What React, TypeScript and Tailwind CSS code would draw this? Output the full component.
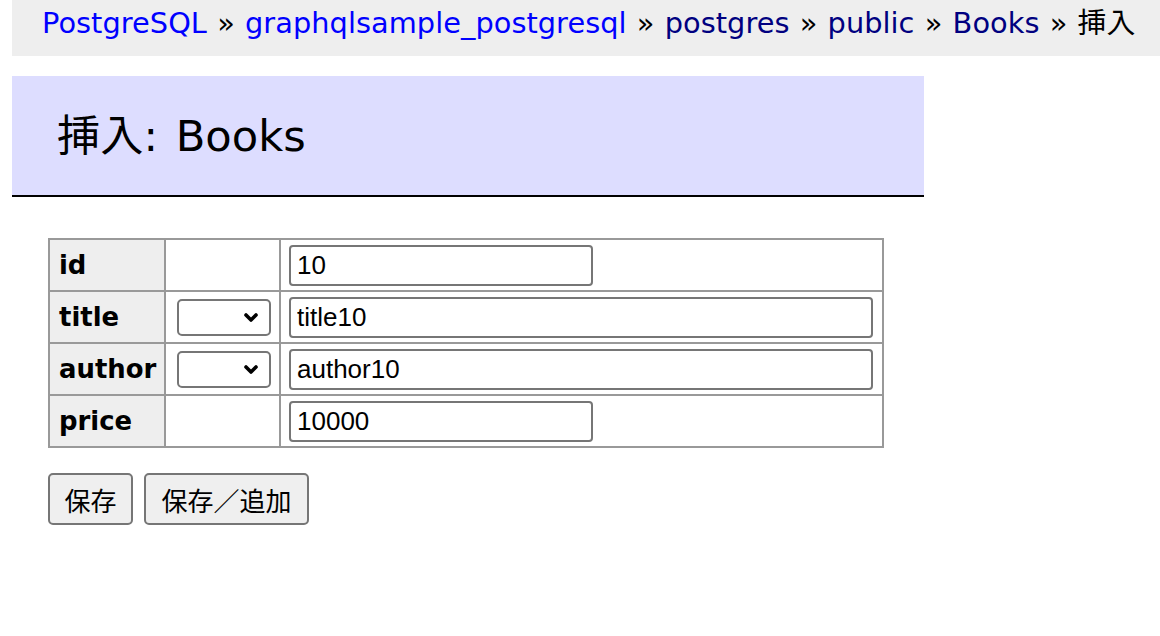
import React from "react";

type Field = {
  name: string;
  value: string;
  hasFunction: boolean;
  wide: boolean;
};

const fields: Field[] = [
  { name: "id", value: "10", hasFunction: false, wide: false },
  { name: "title", value: "title10", hasFunction: true, wide: true },
  { name: "author", value: "author10", hasFunction: true, wide: true },
  { name: "price", value: "10000", hasFunction: false, wide: false },
];

const crumbs = [
  { label: "PostgreSQL", color: "text-[#0000ff]" },
  { label: "graphqlsample_postgresql", color: "text-[#0000ff]" },
  { label: "postgres", color: "text-[#000080]" },
  { label: "public", color: "text-[#000080]" },
  { label: "Books", color: "text-[#000080]" },
];

function Breadcrumb() {
  return (
    <p className="ml-[12px] flex h-[56px] items-center overflow-hidden whitespace-pre bg-[#eeeeee] pb-[8px] pl-[30px] text-[28.8px] tracking-[0.05px] [word-spacing:1px]">
      {crumbs.map((c) => (
        <span key={c.label}>
          <a href="#" className={c.color}>
            {c.label}
          </a>
          {" » "}
        </span>
      ))}
      <span>挿入</span>
    </p>
  );
}

function FunctionSelect() {
  return (
    <div className="relative h-[37px] w-[94px]">
      <select
        className="h-full w-full appearance-none rounded-[5px] border-2 border-[#767676] bg-white"
        defaultValue=""
      >
        <option value=""></option>
      </select>
      {/* chevron */}
      <svg
        className="pointer-events-none absolute right-[13px] top-[14px]"
        width="14"
        height="9"
        viewBox="0 0 14 9"
      >
        <polyline
          points="2,2 7,7 12,2"
          fill="none"
          stroke="#000"
          strokeWidth="3.6"
          strokeLinecap="round"
          strokeLinejoin="round"
        />
      </svg>
    </div>
  );
}

export default function App() {
  return (
    <div className="min-h-screen bg-white font-['DejaVu_Sans','Noto_Sans_CJK_JP',sans-serif] text-black">
      <Breadcrumb />

      <h2 className="ml-[12px] mt-[20px] w-[912px] border-b-2 border-black bg-[#ddddff] px-[45px] py-[34.5px] text-[43.2px] font-normal leading-[50px] [word-spacing:4px]">
        挿入: Books
      </h2>

      <form className="ml-[48px] mt-[41px]">
        <table className="w-[836px] table-fixed border-separate border-spacing-0 border-l-2 border-t-2 border-[#999999] text-[25.9px]">
          <tbody>
            {fields.map((f) => (
              <tr key={f.name} className="h-[52px]">
                <th className="w-[116px] border-b-2 border-r-2 border-[#999999] bg-[#eeeeee] pl-[9px] text-left align-middle font-bold">
                  {f.name}
                </th>
                <td className="w-[115px] border-b-2 border-r-2 border-[#999999] pl-[11px] align-middle">
                  {f.hasFunction && <FunctionSelect />}
                </td>
                <td className="w-[603px] border-b-2 border-r-2 border-[#999999] pl-[8px] align-middle">
                  <input
                    className={
                      "h-[41px] rounded-[4px] border-2 border-[#767676] bg-white px-[6px] font-['Liberation_Sans',Arial,sans-serif] text-[26px] text-black " +
                      (f.wide ? "w-[584px]" : "w-[304px]")
                    }
                    defaultValue={f.value}
                  />
                </td>
              </tr>
            ))}
          </tbody>
        </table>

        <div className="mt-[25px] flex gap-[11px]">
          <button
            type="button"
            className="h-[52px] w-[85px] rounded-[5px] border-2 border-[#767676] bg-[#efefef] font-['Noto_Sans_CJK_JP',sans-serif] text-[26px] text-black"
          >
            保存
          </button>
          <button
            type="button"
            className="h-[52px] w-[165px] rounded-[5px] border-2 border-[#767676] bg-[#efefef] font-['Noto_Sans_CJK_JP',sans-serif] text-[26px] text-black"
          >
            保存／追加
          </button>
        </div>
      </form>
    </div>
  );
}
